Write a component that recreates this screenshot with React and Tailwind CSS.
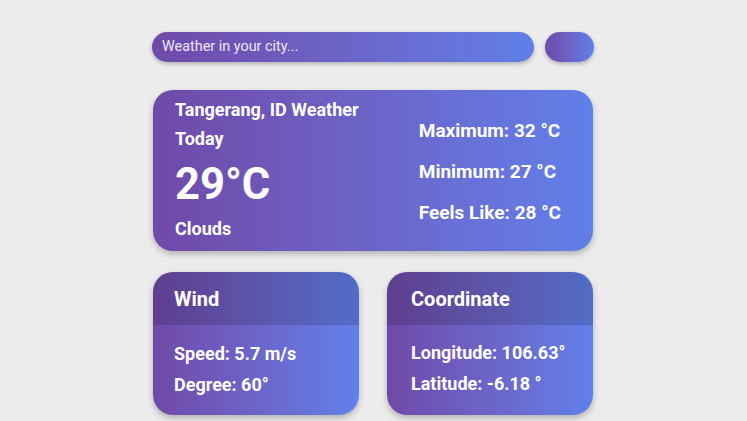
export default function App() {
  const font = { fontFamily: "Roboto, 'Noto Sans', sans-serif" };
  return (
    <div className="w-[747px] h-[421px] bg-[#ececec] overflow-hidden" style={font}>
      <div className="w-[441px] mx-auto pt-[32px]">
        <div className="flex gap-[11px] h-[30px] -ml-[1px]">
          <div className="w-[382px] h-[30px] rounded-full bg-gradient-to-r from-[#7049a8] to-[#5f7fe8] shadow-[0_2px_4px_rgba(0,0,0,0.25)] flex items-center pl-[10px]">
            <span className="text-[14.4px] text-[#ece8f6]">Weather in your city...</span>
          </div>
          <div className="w-[49px] h-[30px] rounded-full bg-gradient-to-r from-[#7049a8] to-[#5f7fe8] shadow-[0_2px_4px_rgba(0,0,0,0.25)]"></div>
        </div>

        <div className="mt-[28px] w-[440px] h-[161px] rounded-[20px] bg-gradient-to-r from-[#7049a8] to-[#6080ea] shadow-[0_3px_6px_rgba(0,0,0,0.25)] flex justify-between pl-[22px] pr-[32px] text-white">
          <div className="flex flex-col pt-[8px]">
            <div className="text-[18px] leading-[24px] font-bold">Tangerang, ID Weather</div>
            <div className="text-[18px] leading-[24px] font-bold mt-[5px]">Today</div>
            <div className="text-[43.5px] leading-[48px] font-bold mt-[10px]">29°C</div>
            <div className="text-[18px] leading-[24px] font-bold mt-[8px]">Clouds</div>
          </div>
          <div className="flex flex-col justify-center gap-[15px] pt-[3px]">
            <div className="text-[19px] leading-[26px] font-bold">Maximum: 32 °C</div>
            <div className="text-[19px] leading-[26px] font-bold">Minimum: 27 °C</div>
            <div className="text-[19px] leading-[26px] font-bold">Feels Like: 28 °C</div>
          </div>
        </div>

        <div className="mt-[21px] flex gap-[28px]">
          <div className="w-[206px] h-[143px] rounded-[20px] overflow-hidden bg-gradient-to-r from-[#7049a8] to-[#6080ea] shadow-[0_3px_6px_rgba(0,0,0,0.25)] text-white">
            <div className="h-[53px] bg-black/15 flex items-center pl-[21px]">
              <span className="text-[20px] font-bold">Wind</span>
            </div>
            <div className="pl-[21px] pt-[17px] flex flex-col gap-[7px]">
              <div className="text-[18px] leading-[24px] font-bold">Speed: 5.7 m/s</div>
              <div className="text-[18px] leading-[24px] font-bold">Degree: 60°</div>
            </div>
          </div>
          <div className="w-[206px] h-[143px] rounded-[20px] overflow-hidden bg-gradient-to-r from-[#7049a8] to-[#6080ea] shadow-[0_3px_6px_rgba(0,0,0,0.25)] text-white">
            <div className="h-[53px] bg-black/15 flex items-center pl-[24px]">
              <span className="text-[20px] font-bold">Coordinate</span>
            </div>
            <div className="pl-[24px] pt-[16px] flex flex-col gap-[7px]">
              <div className="text-[18px] leading-[24px] font-bold">Longitude: 106.63°</div>
              <div className="text-[18px] leading-[24px] font-bold">Latitude: -6.18 °</div>
            </div>
          </div>
        </div>
      </div>
    </div>
  );
}
